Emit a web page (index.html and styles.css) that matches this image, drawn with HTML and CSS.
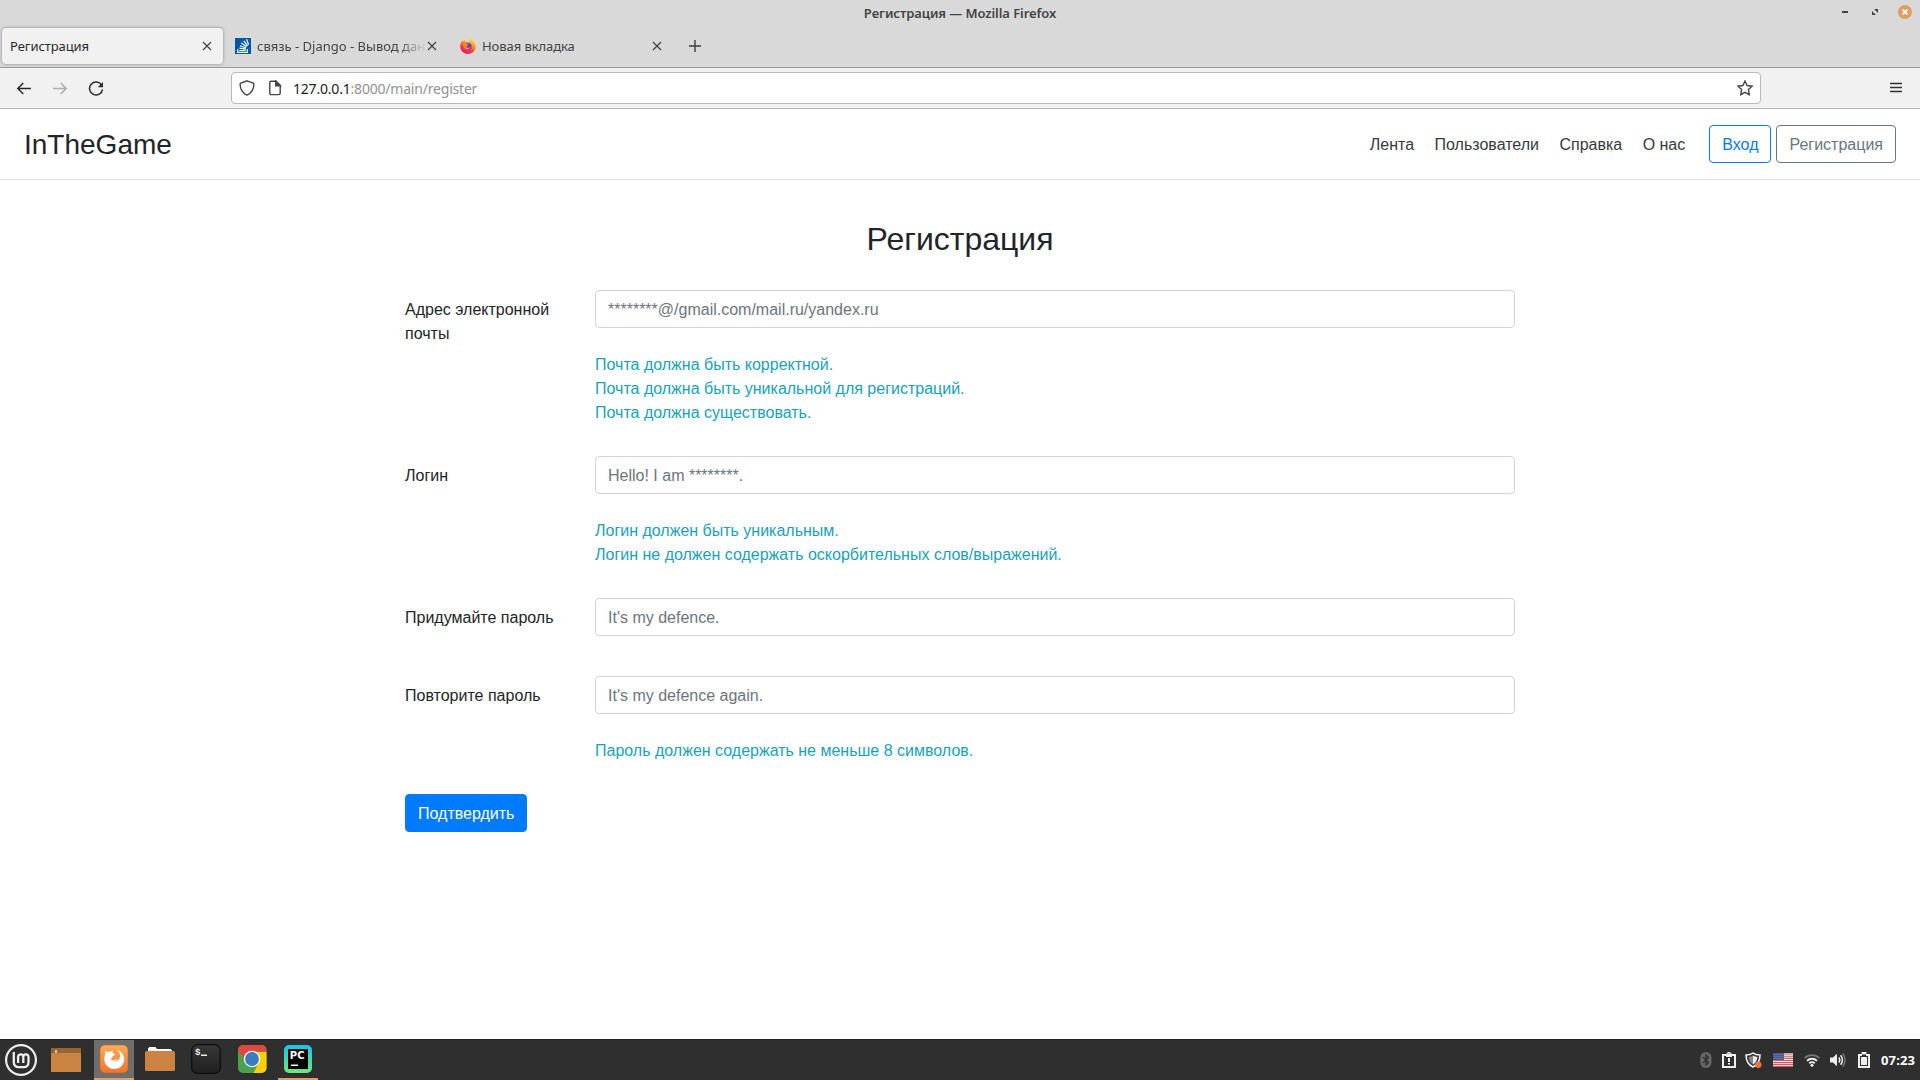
FILE: index.html
```html
<!DOCTYPE html>
<html lang="ru">
<head>
<meta charset="utf-8">
<title>Регистрация</title>
<link rel="stylesheet" href="styles.css">
</head>
<body>
<div class="desktop">
  <header class="titlebar">
    <span class="window-title">Регистрация — Mozilla Firefox</span>
    <div class="window-controls">
      <svg width="14" height="14" viewBox="0 0 14 14"><path fill="#444" d="M4 6h6v2H4z"/></svg>
      <svg width="14" height="14" viewBox="0 0 14 14"><path fill="#444" d="M6 4h4v4zM4 6v4h4z"/></svg>
      <svg width="14" height="14" viewBox="0 0 14 14"><circle cx="7" cy="7" r="7" fill="#e09f61"/><path d="M4.6 4.6l4.8 4.8M9.4 4.6L4.6 9.4" stroke="#fff" stroke-width="2"/></svg>
    </div>
  </header>

  <div class="tabstrip">
    <div class="tab tab-active">
      <span class="tab-label">Регистрация</span>
      <svg class="tab-close" width="10" height="10" viewBox="0 0 10 10"><path d="M1 1l8 8M9 1L1 9"/></svg>
    </div>
    <div class="tab">
      <svg width="16" height="16" viewBox="0 0 16 16"><path fill="#0059a3" d="M0 0h16v16H0z"/><g fill="none" stroke="#fff"><path d="M2.7 11v3.4h9.6V11" stroke-width="1.1"/><path d="M4.3 12.5h6.4M4.4 10.2l6.4 1M5 7.7l6.1 2.3M6.4 5l5.2 3.8M8.8 2.8l3.8 5M11.6 1.2l2 5.6" stroke-width="1.2"/></g></svg>
      <span class="tab-label tab-label-fade">связь - Django - Вывод дан</span>
      <svg class="tab-close" width="10" height="10" viewBox="0 0 10 10"><path d="M1 1l8 8M9 1L1 9"/></svg>
    </div>
    <div class="tab">
      <svg width="16" height="16" viewBox="0 0 16 16">
        <defs>
          <linearGradient id="fox" x1=".85" y1="0" x2=".3" y2="1"><stop offset="0" stop-color="#fff44f"/><stop offset=".4" stop-color="#ff980e"/><stop offset=".7" stop-color="#ff3647"/><stop offset="1" stop-color="#e31587"/></linearGradient>
        </defs>
        <path fill="url(#fox)" d="M11 0c.3 1.500 1.500 2.300 2.700 3.600C15.200 5.200 16 7 15.700 9.300 15.200 13.200 12 16 8 16S.5 13 .2 9C0 6.500.9 4.500 2 3.200l.4-.9.7 1.400C3.600 3 4 2.300 4.700 1.900c-.1.900.2 1.500 1 2.100 1-.3 2.200-.3 3.200.2C9.500 2.900 9.900 1.400 11 0z"/>
        <circle cx="8" cy="8.400" r="3.500" fill="#6a35d8"/>
        <path fill="#ff8a16" d="M2.500 5.500C4.500 4.600 6.500 5 7.500 6.300l1.200.2c-.1.900-1.800 1-2.100 1.700-.3 1 .8 1.900 2 1.600 1.200-.2 1.700-.9 2-1.200-.3 2.200-2 3.400-3.800 3C4.200 11.200 2.600 9 2.500 5.500z"/>
      </svg>
      <span class="tab-label">Новая вкладка</span>
      <svg class="tab-close" width="10" height="10" viewBox="0 0 10 10"><path d="M1 1l8 8M9 1L1 9"/></svg>
    </div>
    <svg class="new-tab" width="14" height="14" viewBox="0 0 14 14"><path d="M7 1v12M1 7h12"/></svg>
  </div>

  <div class="toolbar">
    <div class="nav-buttons">
      <svg width="16" height="16" viewBox="0 0 16 16"><path d="M15 8.500H1.800M7.300 3L1.800 8.500l5.500 5.500"/></svg>
      <svg class="muted" width="16" height="16" viewBox="0 0 16 16"><path d="M1 8.500h13.200M8.700 3L14.200 8.500l-5.500 5.500"/></svg>
      <svg width="16" height="16" viewBox="0 0 16 16"><path d="M13.600 5.100A6.500 6.500 0 1 0 14.500 9.300"/><path d="M15 2v5.200H9.800z" fill="#2b2b2b" stroke="none"/></svg>
    </div>
    <div class="urlbar">
      <svg width="16" height="16" viewBox="0 0 16 16"><path d="M8 .8L14.300 3.200c.5.200.6.500.6.900C14.800 9 12.400 13.300 8 15.200 3.600 13.300 1.200 9 1.100 4.100c0-.4.100-.7.600-.9z"/></svg>
      <svg width="16" height="16" viewBox="0 0 16 16"><path d="M2.800 2.500c0-.8.500-1.300 1.300-1.300H9L13.200 5.400v7.900c0 .8-.5 1.300-1.300 1.300H4.100c-.8 0-1.300-.5-1.300-1.300z"/><path d="M8.700 1v4.700h4.700z" fill="#444"/></svg>
      <span class="url"><span class="url-host">127.0.0.1</span>:8000/main/register</span>
      <svg class="star" width="16" height="16" viewBox="0 0 16 16"><path d="M8 1l2.100 4.500 5 .7-3.700 3.400.9 5L8 12.300 3.700 14.600l.9-5L.9 6.200l5-.7z"/></svg>
    </div>
    <svg class="menu" width="12" height="12" viewBox="0 0 12 12"><path d="M0 1.500h12M0 5.500h12M0 9.500h12"/></svg>
  </div>

  <main class="page">
    <nav class="navbar">
      <span class="brand">InTheGame</span>
      <div class="links">
        <a>Лента</a>
        <a>Пользователи</a>
        <a>Справка</a>
        <a>О нас</a>
      </div>
      <div class="actions">
        <a class="btn btn-outline-primary">Вход</a>
        <a class="btn btn-outline-secondary">Регистрация</a>
      </div>
    </nav>

    <form class="register">
      <h2>Регистрация</h2>
      <div class="row">
        <label for="email">Адрес электронной почты</label>
        <div class="field">
          <input id="email" type="text" placeholder="********@/gmail.com/mail.ru/yandex.ru">
          <p class="hint">Почта должна быть корректной.<br>Почта должна быть уникальной для регистраций.<br>Почта должна существовать.</p>
        </div>
      </div>
      <div class="row">
        <label for="login">Логин</label>
        <div class="field">
          <input id="login" type="text" placeholder="Hello! I am ********.">
          <p class="hint">Логин должен быть уникальным.<br>Логин не должен содержать оскорбительных слов/выражений.</p>
        </div>
      </div>
      <div class="row row-plain">
        <label for="password">Придумайте пароль</label>
        <div class="field">
          <input id="password" type="password" placeholder="It's my defence.">
        </div>
      </div>
      <div class="row">
        <label for="repeat">Повторите пароль</label>
        <div class="field">
          <input id="repeat" type="password" placeholder="It's my defence again.">
          <p class="hint">Пароль должен содержать не меньше 8 символов.</p>
        </div>
      </div>
      <button class="btn btn-primary" type="button">Подтвердить</button>
    </form>
  </main>

  <footer class="taskbar">
    <div class="launchers">
      <div class="task task-menu">
        <svg width="32" height="32" viewBox="0 0 32 32"><circle cx="16" cy="16" r="14.900" fill="none" stroke="#eee" stroke-width="2.200"/><path d="M8.800 8v10.500a4.700 4.700 0 0 0 4.700 4.700h5.300a4.700 4.700 0 0 0 4.700-4.700V13a2.600 2.600 0 0 0-5.200 0v6M18.300 13a2.600 2.600 0 0 0-5.200 0v6" fill="none" stroke="#eee" stroke-width="2.300"/></svg>
      </div>
      <div class="task task-desktop">
        <svg width="30" height="24" viewBox="0 0 30 24"><path fill="#cb8341" d="M0 0h30v24H0z"/><path fill="#9a6231" d="M0 0h30v5H0z"/><path fill="#fff" d="M4 2.500h2v2H4z"/></svg>
      </div>
      <div class="task task-running task-focused">
        <svg width="30" height="30" viewBox="0 0 30 30"><defs><linearGradient id="ffx" x2="0" y2="1"><stop offset="0" stop-color="#ffae58"/><stop offset="1" stop-color="#f2722c"/></linearGradient></defs><rect x="1" y="1" width="28" height="28" rx="5" fill="url(#ffx)" stroke="#b9642c" stroke-width=".6"/><path fill="#fff" d="M6.500 6.500L8 8.200c1-.5 2-.6 3-.4.800-.8 1.800-1.300 3-1.400-.6.900-.8 1.800-.5 2.700l2.500.8c0 1.300-2 1.600-2.700 2.600l.2 1.600-2.200.6c1 1.500 2.900 1.800 4.300 1.200 1-.4 1.700-.9 2.500-.8-.5 1.300-2 2.300-3.700 2.500 4 .4 7-2.500 6.700-6.300-.2-2.300-1.500-3.900-3.300-5.300 4.500 1.200 7.400 4.800 7.400 9.200 0 5.500-4.400 9.800-10 9.800S5.300 20.600 5.300 15c0-2 .5-3.600 1.200-4.900-.4-1.100-.3-2.400 0-3.600z"/></svg>
      </div>
      <div class="task">
        <svg class="files" width="30" height="24" viewBox="0 0 30 24"><path fill="#fff" d="M3 5V1.500L4.500 0h6L12 2h13.500L27 3.500V5z"/><rect y="4" width="30" height="20" rx="1.500" fill="#cb8341"/></svg>
      </div>
      <div class="task">
        <svg width="30" height="30" viewBox="0 0 30 30"><defs><linearGradient id="term" x2="0" y2="1"><stop offset="0" stop-color="#373737"/><stop offset="1" stop-color="#202020"/></linearGradient></defs><rect x=".7" y=".7" width="28.600" height="28.600" rx="5.500" fill="url(#term)" stroke="#0d0d0d" stroke-width="1.200"/><text class="glyph-mono" x="4" y="11">$</text><path fill="#eee" d="M10 10.500h6V12h-6z"/></svg>
      </div>
      <div class="task">
        <svg width="30" height="30" viewBox="0 0 30 30"><defs><clipPath id="sq"><rect x="1" y="1" width="28.500" height="28" rx="5"/></clipPath></defs><g clip-path="url(#sq)"><path fill="#4aa14e" d="M0 0h30v30H0z"/><path fill="#fccd08" d="M15 8h15v22H16l6-12z"/><path fill="#e1493f" d="M0 0h30v7.500H15L8.500 18 0 4z"/></g><circle cx="15" cy="15" r="8.300" fill="#f2f2f2"/><circle cx="15" cy="15" r="6.900" fill="#3b7cc0"/></svg>
      </div>
      <div class="task task-running">
        <svg width="30" height="30" viewBox="0 0 30 30"><defs><linearGradient id="pc" x2="0" y2="1"><stop offset="0" stop-color="#14c5ec"/><stop offset="1" stop-color="#6fe878"/></linearGradient></defs><rect x="1" y="1" width="28" height="28" rx="5" fill="url(#pc)"/><path fill="#000" d="M5 5h20v20H5z"/><text class="glyph-pc" x="6.800" y="15.300">PC</text><path fill="#fff" d="M8 20.500h7V22H8z"/></svg>
      </div>
    </div>

    <div class="tray">
      <svg class="t-bt" width="12" height="16" viewBox="0 0 12 16"><rect x=".3" width="11.200" height="16" rx="5.500" fill="#666"/><path d="M3 5.200l5.500 5.300L6 13V3l2.500 2.500L3 10.800" fill="none" stroke="#2b2b2b" stroke-width="1.100"/></svg>
      <svg class="t-clip" width="14" height="16" viewBox="0 0 14 16"><path d="M1 3h12v12H1z" fill="none" stroke="#eee" stroke-width="2"/><path fill="#eee" fill-rule="evenodd" d="M5.500 0h3v1.500H10V5H4V1.500h1.500zM6.500 1.500v1h1v-1z"/><path fill="#eee" d="M6 6h2v4H6zM6 11h2v1.500H6z"/></svg>
      <svg class="t-shield" width="17" height="16" viewBox="0 0 17 16"><path d="M8 1C6 2.600 4 3 1 3c0 5 2 9.600 7 12 5-2.400 7-7 7-12-3 0-5-.4-7-2z" fill="#333" stroke="#eee" stroke-width="1.600"/><path d="M8 3.500v9C5 10.500 4 8.500 3.500 5 5.500 4.800 7 4.300 8 3.500z" fill="#888"/><path d="M8 3.500v9c3-2 4-4 4.500-7.500-2-.2-3.500-.7-4.500-1.500z" fill="#eee"/><circle cx="13.300" cy="12.700" r="3.200" fill="#f5743a"/></svg>
      <svg class="t-flag" width="20" height="14" viewBox="0 0 20 14"><path fill="#eee" d="M0 0h20v14H0z"/><path d="M0 1h20M0 3.200h20M0 5.400h20M0 7.500h20M0 9.600h20M0 11.600h20M0 13.500h20" stroke="#d25b60" stroke-width="1.100"/><path fill="#4a5a8c" d="M0 0h11v7H0z"/><path d="M1.500 1.500h9M1.500 3.500h9M1.500 5.500h9" stroke="#8f9abb" stroke-width=".7" stroke-dasharray="1 1"/></svg>
      <svg class="t-wifi" width="16" height="14" viewBox="0 0 16 14"><g fill="none" stroke="#eee" stroke-width="1.900"><path d="M.6 5.200a10.500 10.500 0 0 1 14.800 0" stroke="#777"/><path d="M3 7.800a7 7 0 0 1 10 0"/><path d="M5.300 10.300a3.800 3.800 0 0 1 5.400 0"/></g><circle cx="8" cy="12.200" r="1.500" fill="#eee"/></svg>
      <svg class="t-vol" width="16" height="14" viewBox="0 0 16 14"><path fill="#eee" d="M0 4.500h3L7 .8v12.400L3 9.500H0z"/><g fill="none" stroke="#eee" stroke-width="1.500"><path d="M8.800 4.500a4 4 0 0 1 0 5"/><path d="M10.600 2.300a7 7 0 0 1 0 9.400"/><path d="M12.600.6a9.500 9.500 0 0 1 0 12.800" stroke="#777"/></g></svg>
      <svg class="t-bat" width="12" height="16" viewBox="0 0 12 16"><path fill="#eee" fill-rule="evenodd" d="M3.500 0h5v2H12v14H0V2h3.500zM2 4v10h8V4H8V2.500H4V4z"/><path fill="#eee" d="M3 5h6v8H3z"/></svg>
      <span class="clock">07:23</span>
    </div>
  </footer>
</div>
</body>
</html>
```
FILE: styles.css
```css
* { box-sizing: border-box; }

body {
  margin: 0;
  font-family: "Liberation Sans", Arial, sans-serif;
  font-size: 16px;
  line-height: 1.5;
  color: #212529;
  background: #fff;
}

svg { display: block; flex: none; }

.desktop {
  display: flex;
  flex-direction: column;
  width: 1920px;
  height: 1080px;
  overflow: hidden;
}

/* Window chrome */
.titlebar, .tabstrip, .toolbar, .taskbar { font-family: "Noto Sans", sans-serif; flex: none; }

.titlebar {
  display: grid;
  grid-template-columns: 1fr auto 1fr;
  align-items: center;
  height: 26px;
  padding-right: 8px;
  padding-left: 8px;
  background: #d9d9d9;
}
.window-title {
  grid-column: 2;
  padding-top: 2px;
  font-size: 13px;
  font-weight: 600;
  letter-spacing: -0.08px;
  color: #444;
}
.window-controls {
  display: flex;
  justify-content: flex-end;
  gap: 16px;
  padding-bottom: 2px;
}

.tabstrip {
  display: flex;
  align-items: center;
  height: 42px;
  padding-bottom: 2px;
  background: #d9d9d9;
  border-bottom: 1px solid #979a9a;
}
.tab {
  display: flex;
  align-items: center;
  gap: 6px;
  width: 225px;
  height: 36px;
  padding: 0 13px 0 10px;
  font-size: 13px;
  line-height: 20px;
  letter-spacing: -0.07px;
  color: #444;
}
.tab-active {
  width: 221px;
  margin: 0 2px;
  padding: 0 11px 0 8px;
  color: #2b2b2b;
  background: #f1f1f1;
  border-radius: 4px;
  box-shadow: 0 0 3px rgba(60, 60, 80, .6);
}
.tab-label {
  flex: 1;
  white-space: nowrap;
}
.tab-label-fade {
  margin-right: -5px;
  letter-spacing: 0;
  mask-image: linear-gradient(to right, #000 calc(100% - 28px), transparent);
}
.tab-close, .new-tab { fill: none; stroke: #3c3c3c; stroke-width: 1.1; }
.new-tab { margin-left: 13px; stroke-width: 1.4; }

.toolbar {
  display: flex;
  align-items: center;
  height: 41px;
  padding: 0 18px 0 16px;
  background: #f1f1f1;
  border-bottom: 1px solid #b8b8b8;
}
.nav-buttons { display: flex; gap: 20px; width: 215px; }
.nav-buttons svg { fill: none; stroke: #2b2b2b; stroke-width: 1.5; }
.nav-buttons .muted { stroke: #adadad; }
.urlbar {
  display: flex;
  align-items: center;
  width: 1530px;
  height: 32px;
  padding: 0 7px;
  background: #fff;
  border: 1px solid #b8b8b8;
  border-radius: 4px;
}
.urlbar svg { fill: none; stroke: #444; stroke-width: 1.4; }
.urlbar svg + svg { margin-left: 12px; }
.url {
  flex: 1;
  margin-left: 10px;
  padding-top: 1px;
  font-size: 14px;
  letter-spacing: -0.2px;
  color: #929292;
}
.url-host { color: #222; }
.menu { margin-left: auto; fill: none; stroke: #333; stroke-width: 1.5; }

/* Site */
.page { flex: 1; min-height: 0; background: #fff; }

.navbar {
  display: flex;
  align-items: center;
  height: 71px;
  padding: 0 24px;
  border-bottom: 1px solid #dee2e6;
}
.brand { margin-right: auto; padding-top: 2px; font-size: 28px; line-height: 33.6px; }
.links { display: flex; gap: 4.44px; margin-right: 16px; padding-top: 2px; color: #343a40; }
.links a { padding: 0 8px; }
.actions { display: flex; gap: 5px; }

.btn {
  display: block;
  height: 38px;
  padding: 7px 12px 5px;
  font: inherit;
  line-height: 24px;
  border: 1px solid transparent;
  border-radius: 4px;
}
.btn-outline-primary { color: #007bff; border-color: #007bff; }
.btn-outline-secondary { color: #6c757d; border-color: #6c757d; }
.btn-primary { color: #fff; background: #007bff; border-color: #007bff; }

.register { width: 1110px; margin: 0 auto; padding-top: 40px; }
.register h2 {
  margin: 0 0 32px;
  font-size: 32px;
  font-weight: 500;
  line-height: 1.2;
  text-align: center;
}
.row { display: grid; grid-template-columns: 160px 1fr; gap: 30px; margin-bottom: 32px; }
.row-plain { margin-bottom: 40px; height: 38px; }
.row label { padding-top: 8px; }
.row input {
  display: block;
  width: 100%;
  height: 38px;
  padding: 7px 12px 5px;
  font: inherit;
  border: 1px solid #ced4da;
  border-radius: 4px;
}
.row input::placeholder { color: #6c757d; opacity: 1; }
.hint { margin: 25px 0 -1px; color: #17a2b8; }

/* Panel */
.taskbar {
  display: flex;
  justify-content: space-between;
  height: 41px;
  background: #2f2f2f;
  border-top: 1px solid #1f1f1f;
}
.launchers { display: flex; gap: 6px; }
.task {
  display: flex;
  align-items: center;
  justify-content: center;
  width: 40px;
  height: 40px;
  border-bottom: 2px solid transparent;
}
.task-menu { width: 42px; padding-top: 2px; }
.task-desktop { margin-left: -2px; padding-top: 2px; }
.task-desktop + .task { margin-left: 2px; }
.task-running { border-bottom-color: #e09f61; }
.task-focused { background: #6e6e6e; }
.glyph-mono { font: bold 9px "Liberation Mono", monospace; fill: #eee; }
.glyph-pc { font: bold 10px "DejaVu Sans", sans-serif; fill: #fff; }

.tray { display: flex; align-items: center; padding-right: 4px; }
.t-clip { margin-left: 10px; }
.t-shield { margin-left: 9px; }
.t-flag { margin-left: 11px; }
.t-wifi { margin-left: 11px; }
.t-vol { margin-left: 10px; }
.t-bat { margin-left: 12px; }
.clock {
  width: 35px;
  margin-left: 11px;
  padding-top: 2px;
  font-size: 13px;
  font-weight: 700;
  letter-spacing: 0.15px;
  color: #fff;
}
```
